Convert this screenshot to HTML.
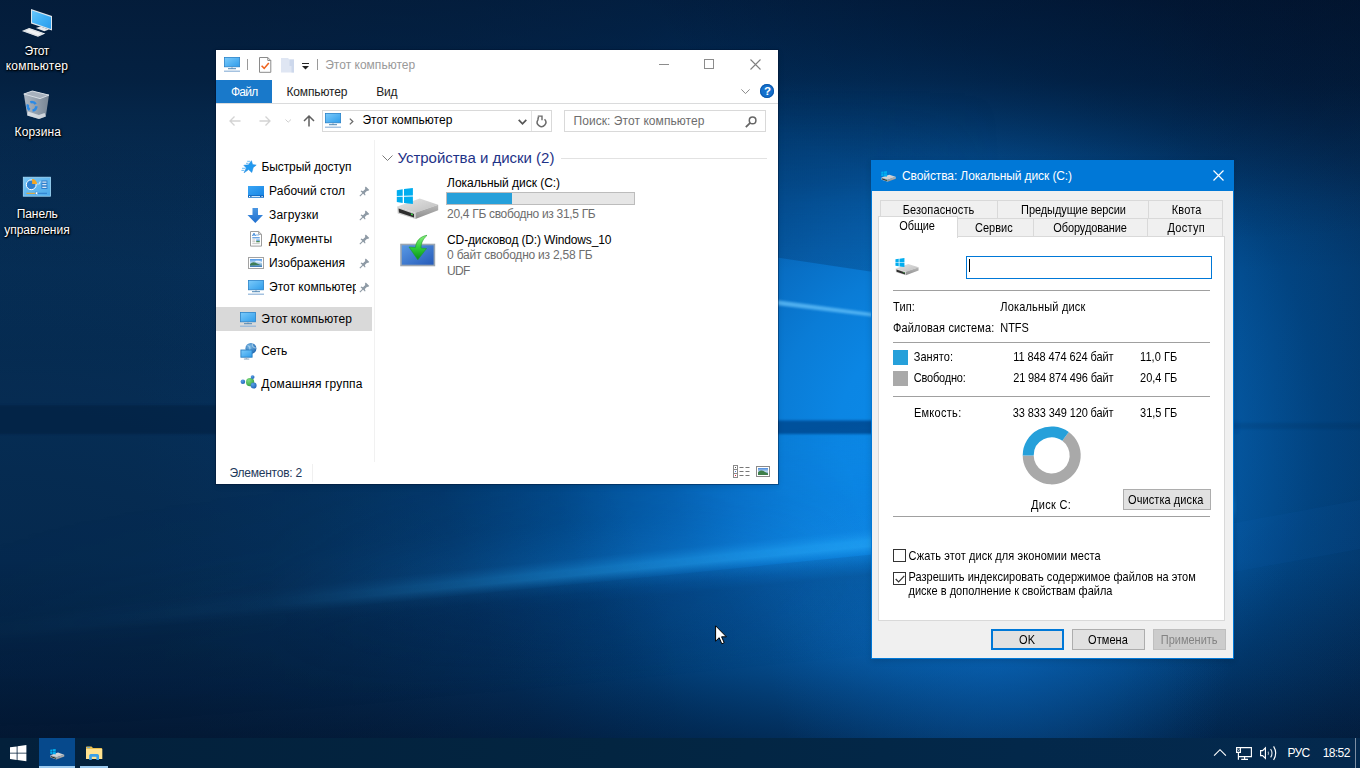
<!DOCTYPE html>
<html><head><meta charset="utf-8"><title>Desktop</title>
<style>html,body{margin:0;padding:0;width:1360px;height:768px;overflow:hidden;background:#04183a;font-family:'Liberation Sans',sans-serif;}
#root{position:relative;width:1360px;height:768px;overflow:hidden}
</style></head><body><div id="root">
<svg style="position:absolute;left:0;top:0" width="1360" height="768" viewBox="0 0 1360 768">
<defs>
<radialGradient id="glow" gradientUnits="userSpaceOnUse" cx="935" cy="430" r="800">
<stop offset="0" stop-color="#0c8ae8"/><stop offset="0.12" stop-color="#0b86e4"/><stop offset="0.2" stop-color="#0a7cd6"/><stop offset="0.27" stop-color="#086ec4"/><stop offset="0.34" stop-color="#055eac"/><stop offset="0.48" stop-color="#024888"/><stop offset="0.62" stop-color="#043c72"/><stop offset="0.78" stop-color="#063868"/><stop offset="1" stop-color="#073662"/>
</radialGradient>
<linearGradient id="topdark" gradientUnits="userSpaceOnUse" x1="0" y1="0" x2="0" y2="270"><stop offset="0" stop-color="#010a1e" stop-opacity="0.58"/><stop offset="0.3" stop-color="#010a1e" stop-opacity="0.48"/><stop offset="0.55" stop-color="#010a1e" stop-opacity="0.26"/><stop offset="0.75" stop-color="#010a1e" stop-opacity="0.1"/><stop offset="1" stop-color="#010a1e" stop-opacity="0"/></linearGradient>
<linearGradient id="botdark" x1="0" y1="0" x2="0" y2="1"><stop offset="0" stop-color="#010a1e" stop-opacity="0"/><stop offset="0.55" stop-color="#010a1e" stop-opacity="0.27"/><stop offset="0.85" stop-color="#010a1e" stop-opacity="0.5"/><stop offset="1" stop-color="#010a1e" stop-opacity="0.56"/></linearGradient>
<linearGradient id="rightdark" gradientUnits="userSpaceOnUse" x1="1150" y1="0" x2="1360" y2="0"><stop offset="0" stop-color="#010a1e" stop-opacity="0"/><stop offset="1" stop-color="#010a1e" stop-opacity="0.1"/></linearGradient>
<linearGradient id="beam" gradientUnits="userSpaceOnUse" x1="537.4" y1="598.1" x2="523.1" y2="454.9"><stop offset="0" stop-color="#20a4fa" stop-opacity="0"/><stop offset="0.07" stop-color="#20a4fa" stop-opacity="0.12"/><stop offset="0.13" stop-color="#28acfc" stop-opacity="0.6"/><stop offset="0.17" stop-color="#24a8fa" stop-opacity="0.62"/><stop offset="0.25" stop-color="#1490f0" stop-opacity="0.3"/><stop offset="0.5" stop-color="#0c80e4" stop-opacity="0.12"/><stop offset="1" stop-color="#0a70d8" stop-opacity="0"/></linearGradient>
<linearGradient id="beamfade" gradientUnits="userSpaceOnUse" x1="0" y1="0" x2="1360" y2="0"><stop offset="0" stop-color="#fff" stop-opacity="0.03"/><stop offset="0.2" stop-color="#fff" stop-opacity="0.1"/><stop offset="0.4" stop-color="#fff" stop-opacity="0.6"/><stop offset="0.64" stop-color="#fff" stop-opacity="1"/><stop offset="0.9" stop-color="#fff" stop-opacity="1"/><stop offset="0.91" stop-color="#fff" stop-opacity="0"/></linearGradient>
<linearGradient id="under" gradientUnits="userSpaceOnUse" x1="536" y1="588" x2="546" y2="688"><stop offset="0" stop-color="#021a40" stop-opacity="0.1"/><stop offset="0.2" stop-color="#021a40" stop-opacity="0.3"/><stop offset="1" stop-color="#021a40" stop-opacity="0"/></linearGradient>
<mask id="bm"><rect width="1360" height="768" fill="url(#beamfade)"/></mask>
<linearGradient id="panetop" gradientUnits="userSpaceOnUse" x1="0" y1="90" x2="0" y2="270"><stop offset="0" stop-color="#02244e" stop-opacity="0"/><stop offset="0.5" stop-color="#02244e" stop-opacity="0.16"/><stop offset="1" stop-color="#02244e" stop-opacity="0.26"/></linearGradient>
<radialGradient id="bl" gradientUnits="userSpaceOnUse" cx="0" cy="820" r="700"><stop offset="0" stop-color="#010a1e" stop-opacity="0.42"/><stop offset="0.5" stop-color="#010a1e" stop-opacity="0.25"/><stop offset="1" stop-color="#010a1e" stop-opacity="0"/></radialGradient>
<radialGradient id="br" gradientUnits="userSpaceOnUse" cx="1420" cy="800" r="330"><stop offset="0" stop-color="#010a1e" stop-opacity="0.14"/><stop offset="1" stop-color="#010a1e" stop-opacity="0"/></radialGradient>
<radialGradient id="tr" gradientUnits="userSpaceOnUse" cx="0" cy="0" r="1" gradientTransform="translate(1230 -110) scale(620 350)"><stop offset="0" stop-color="#010a1e" stop-opacity="0.55"/><stop offset="0.6" stop-color="#010a1e" stop-opacity="0.3"/><stop offset="1" stop-color="#010a1e" stop-opacity="0"/></radialGradient>
<linearGradient id="ptm" gradientUnits="userSpaceOnUse" x1="860" y1="0" x2="1000" y2="0"><stop offset="0" stop-color="#fff" stop-opacity="1"/><stop offset="1" stop-color="#fff" stop-opacity="0"/></linearGradient>
<mask id="ptmask"><rect width="1360" height="768" fill="url(#ptm)"/></mask>
<radialGradient id="spot" gradientUnits="userSpaceOnUse" cx="1000" cy="655" r="230"><stop offset="0" stop-color="#0a6cc8" stop-opacity="0.4"/><stop offset="1" stop-color="#0a6cc8" stop-opacity="0"/></radialGradient>
<linearGradient id="lm" gradientUnits="userSpaceOnUse" x1="0" y1="110" x2="0" y2="404"><stop offset="0" stop-color="#010a1e" stop-opacity="0"/><stop offset="0.3" stop-color="#010a1e" stop-opacity="0.13"/><stop offset="0.8" stop-color="#010a1e" stop-opacity="0.1"/><stop offset="1" stop-color="#010a1e" stop-opacity="0.04"/></linearGradient>
<filter id="b6" x="-10%" y="-100%" width="120%" height="300%"><feGaussianBlur stdDeviation="5"/></filter>
<filter id="b2" x="-10%" y="-100%" width="120%" height="300%"><feGaussianBlur stdDeviation="1"/></filter>
</defs>
<rect width="1360" height="768" fill="url(#glow)"/>
<rect width="1360" height="270" fill="url(#topdark)"/>
<rect y="560" width="1360" height="208" fill="url(#botdark)"/>
<rect x="1150" width="210" height="768" fill="url(#rightdark)"/>
<rect x="-10" y="110" width="226" height="294" fill="url(#lm)"/>
<rect width="1360" height="768" fill="url(#spot)"/>
<rect width="1360" height="768" fill="url(#bl)"/>
<rect width="1360" height="768" fill="url(#br)"/>
<rect width="1360" height="400" fill="url(#tr)"/>
<!-- pane top edge: darker above -->
<path d="M600 90 L1000 90 L1000 291 L600 231 Z" fill="url(#panetop)" mask="url(#ptmask)"/>
<!-- horizontal bar of the window logo -->
<rect x="760" y="420.5" width="480" height="13.5" fill="#04519c" filter="url(#b2)"/>
<rect x="-20" y="405" width="780" height="29" fill="#021230" opacity="0.36" filter="url(#b2)"/>
<rect x="1230" y="423" width="150" height="6" fill="#021230" opacity="0.1" filter="url(#b2)"/>
<!-- light streak -->
<path d="M700 290 L880 314 L880 317.5 L700 296 Z" fill="#66c2fb" opacity="0.75" filter="url(#b2)"/>
<!-- floor beam -->
<g mask="url(#bm)">
<path d="M1360 360 L1360 520 L0 656 L0 496 Z" fill="url(#beam)"/>
<path d="M1360 505.8 L0 641.8 L0 750 L1360 614 Z" fill="url(#under)"/>
</g>
<path d="M1234 572 L1360 549 L1360 500 L1234 523 Z" fill="#1a7ad8" opacity="0.06"/>
</svg>
<svg style="position:absolute;left:0;top:0" width="80" height="250" viewBox="0 0 80 250">
<defs>
<linearGradient id="mon" x1="0" y1="0" x2="1" y2="1"><stop offset="0" stop-color="#69c6fb"/><stop offset="0.5" stop-color="#3fb0f5"/><stop offset="1" stop-color="#2a9cec"/></linearGradient>
<linearGradient id="bin" x1="0" y1="0" x2="1" y2="0"><stop offset="0" stop-color="#bcc5cf"/><stop offset="1" stop-color="#828e9b"/></linearGradient>
<linearGradient id="cpl" x1="0" y1="0" x2="1" y2="1"><stop offset="0" stop-color="#7cc8f6"/><stop offset="1" stop-color="#4aa8ea"/></linearGradient>
</defs>
<!-- this pc -->
<path d="M31 9 L52 16 V30.4 L31 23.6 Z" fill="#dfe5ea"/>
<path d="M32 10.6 L51 16.9 V29 L32 22.6 Z" fill="url(#mon)"/>
<path d="M35.9 28.1 L40.6 26.4 L49 29.5 L44.3 31.2 Z" fill="#e4e8ec"/>
<path d="M21.9 30.9 L29.2 27.9 L45.3 33.5 L38 36.8 Z" fill="#f1f3f5"/>
<path d="M24 31 L29.2 28.9 L43 33.6 L37.9 35.8 Z" fill="none" stroke="#c9ced4" stroke-width="0.6"/>
<!-- recycle bin -->
<path d="M23.8 94 L32.3 91 L49 95.1 L45.8 116.5 L39 119 L27.3 115.4 Z" fill="url(#bin)" opacity="0.92"/>
<path d="M23.8 94 L32.3 91 L49 95.1 L40 98.6 Z" fill="#a7b1bd" stroke="#dde3e9" stroke-width="0.9"/>
<path d="M27.3 115.4 L39 119 L45.8 116.5 L44.6 113 L38.8 115 L28 111.5 Z" fill="#eef1f4" opacity="0.7"/>
<circle cx="32" cy="106.3" r="4.3" fill="none" stroke="#2b8ae6" stroke-width="2.6" stroke-dasharray="6 3"/>
<!-- control panel -->
<rect x="23.3" y="177.2" width="27.2" height="19" fill="url(#cpl)" stroke="#a6dcfa" stroke-width="0.8"/>
<circle cx="31.2" cy="184.8" r="4.9" fill="#2f80d0" stroke="#fff" stroke-width="1"/>
<path d="M31.2 184.8 V179.9 A4.9 4.9 0 0 1 36.1 184.8 Z" fill="#f5a623" transform="translate(0.9 -0.9)"/>
<rect x="41.4" y="180.5" width="6" height="8.5" fill="#2f7fcc"/>
<path d="M37 184 H39.5 V182 H41.4" stroke="#dff1fc" stroke-width="0.7" fill="none"/>
<rect x="42.3" y="181.6" width="4.2" height="1" fill="#fff"/><rect x="42.3" y="184.2" width="4.2" height="1" fill="#fff"/><rect x="42.3" y="186.8" width="4.2" height="1" fill="#fff"/>
<rect x="26.5" y="192.8" width="9" height="1" fill="#f5a623"/><rect x="37" y="192.8" width="10" height="1" fill="#2f7fcc"/><rect x="35.6" y="192" width="2" height="2.5" fill="#fff" stroke="#2f7fcc" stroke-width="0.4"/>
</svg>
<div style="position:absolute;left:216px;top:50px;width:562px;height:434px;background:#fff;box-shadow:0 0 0 1px rgba(0,16,44,.38),0 2px 6px rgba(0,0,0,.14);"></div><svg style="position:absolute;left:224px;top:57px;overflow:visible;" width="16" height="16" viewBox="0 0 16 16"><defs><linearGradient id="cmg" x1="0" y1="0" x2="1" y2="1"><stop offset="0" stop-color="#7ccbfb"/><stop offset="1" stop-color="#2e9cea"/></linearGradient></defs>
<rect x="0.4" y="0.4" width="15.2" height="9.4" fill="url(#cmg)" stroke="#2a82c8" stroke-width="0.8"/>
<rect x="7" y="10.5" width="2" height="1" fill="#9ab"/>
<rect x="4" y="11.2" width="8" height="1" fill="#4d86b5"/>
<rect x="0" y="13.6" width="16" height="1.2" fill="#8fb3d9"/></svg><div style="position:absolute;left:247px;top:59px;width:1px;height:11px;background:#9a9a9a"></div><svg style="position:absolute;left:259px;top:57px;overflow:visible;" width="12.5" height="16" viewBox="0 0 12.5 16"><path d="M0.5 0.5 H8.8 L11.8 3.5 V15.3 H0.5 Z" fill="#fff" stroke="#8a8a8a"/><path d="M8.8 0.5 V3.5 H11.8" fill="none" stroke="#8a8a8a"/><path d="M2.6 8.8 L5.2 11.4 L9.8 6" fill="none" stroke="#f0641e" stroke-width="1.6"/></svg><svg style="position:absolute;left:281px;top:57px;overflow:visible;" width="13" height="16" viewBox="0 0 13 16"><path d="M0 1 H7 L8.5 2.5 H13 V15.5 H0 Z" fill="#dfe6f3"/><path d="M8.5 2.5 H13 V15.5 H10.5 V9 H8.5 Z" fill="#cdd8ec"/></svg><div style="position:absolute;left:302px;top:63px;width:7px;height:1px;background:#222"></div><svg style="position:absolute;left:302px;top:65.5px;overflow:visible;" width="7" height="4" viewBox="0 0 7 4"><path d="M0 0 H7 L3.5 3.5 Z" fill="#222"/></svg><div style="position:absolute;left:317px;top:59px;width:1px;height:11px;background:#9a9a9a"></div><div style="position:absolute;left:659px;top:64px;width:10px;height:1px;background:#8c8c8c"></div><div style="position:absolute;left:704px;top:59px;width:10px;height:10px;border:1px solid #8c8c8c;box-sizing:border-box"></div><svg style="position:absolute;left:749.5px;top:58.5px;overflow:visible;" width="11" height="11" viewBox="0 0 11 11"><path d="M0.5 0.5 L10.5 10.5 M10.5 0.5 L0.5 10.5" stroke="#808080" stroke-width="1.1" fill="none"/></svg><div style="position:absolute;left:216px;top:80px;width:56px;height:23px;background:#1979ca"></div><div style="position:absolute;left:216px;top:103px;width:562px;height:1px;background:#dadbdc"></div><svg style="position:absolute;left:740.5px;top:88.5px;overflow:visible;" width="9" height="5.5" viewBox="0 0 9 5.5"><path d="M0.4 0.4 L4.5 4.6 L8.6 0.4" stroke="#8a8a8a" stroke-width="1" fill="none"/></svg><div style="position:absolute;left:760px;top:84px;width:14px;height:14px;border-radius:7px;background:#1470cc;box-shadow:inset 0 0 0 1px #0b58ad"></div><svg style="position:absolute;left:229px;top:116px;overflow:visible;" width="12" height="10" viewBox="0 0 12 10"><path d="M11.5 5 H1 M5.5 0.5 L1 5 L5.5 9.5" stroke="#d3d3d3" stroke-width="1.3" fill="none"/></svg><svg style="position:absolute;left:258.5px;top:116px;overflow:visible;" width="12" height="10" viewBox="0 0 12 10"><path d="M0.5 5 H11 M6.5 0.5 L11 5 L6.5 9.5" stroke="#d3d3d3" stroke-width="1.3" fill="none"/></svg><svg style="position:absolute;left:285px;top:119px;overflow:visible;" width="6.5" height="4" viewBox="0 0 6.5 4"><path d="M0.5 0.5 L3.2 3.2 L6 0.5" stroke="#cfcfcf" stroke-width="1" fill="none"/></svg><svg style="position:absolute;left:303px;top:114.5px;overflow:visible;" width="12" height="12" viewBox="0 0 12 12"><path d="M6 11.5 V1.2 M1 6 L6 1 L11 6" stroke="#5f5f5f" stroke-width="1.5" fill="none"/></svg><div style="position:absolute;left:322px;top:110px;width:230px;height:22px;border:1px solid #d9d9d9;box-sizing:border-box;background:#fff"></div><svg style="position:absolute;left:325px;top:113px;overflow:visible;" width="16" height="16" viewBox="0 0 16 16"><defs><linearGradient id="cmg" x1="0" y1="0" x2="1" y2="1"><stop offset="0" stop-color="#7ccbfb"/><stop offset="1" stop-color="#2e9cea"/></linearGradient></defs>
<rect x="0.4" y="0.4" width="15.2" height="9.4" fill="url(#cmg)" stroke="#2a82c8" stroke-width="0.8"/>
<rect x="7" y="10.5" width="2" height="1" fill="#9ab"/>
<rect x="4" y="11.2" width="8" height="1" fill="#4d86b5"/>
<rect x="0" y="13.6" width="16" height="1.2" fill="#8fb3d9"/></svg><svg style="position:absolute;left:348.5px;top:117.5px;overflow:visible;" width="5" height="7" viewBox="0 0 5 7"><path d="M0.8 0.6 L3.8 3.5 L0.8 6.4" stroke="#6a6a6a" stroke-width="1.3" fill="none"/></svg><svg style="position:absolute;left:517.5px;top:119px;overflow:visible;" width="9" height="6.5" viewBox="0 0 9 6.5"><path d="M0.7 0.8 L4.5 4.8 L8.3 0.8" stroke="#555" stroke-width="1.7" fill="none"/></svg><div style="position:absolute;left:531px;top:111px;width:1px;height:20px;background:#e2e2e2"></div><svg style="position:absolute;left:535.9px;top:113.9px;overflow:visible;" width="12" height="14" viewBox="0 0 12 14"><path d="M8.54 5.16 A4.3 4.3 0 1 1 1.9 5.9 Q2.0 4.2 2.6 2.9" stroke="#6b6b6b" stroke-width="1.5" fill="none"/><path d="M1.8 2.1 H6.0 V6.2" stroke="#6b6b6b" stroke-width="1.4" fill="none"/></svg><div style="position:absolute;left:564px;top:110px;width:202px;height:22px;border:1px solid #d9d9d9;box-sizing:border-box;background:#fff"></div><svg style="position:absolute;left:745px;top:115.5px;overflow:visible;" width="12" height="12" viewBox="0 0 12 12"><circle cx="7.6" cy="4.4" r="3.3" stroke="#666" stroke-width="1.5" fill="none"/><path d="M5.2 6.8 L0.8 11.2" stroke="#666" stroke-width="1.8"/></svg><div style="position:absolute;left:374px;top:140px;width:1px;height:322px;background:#f1f1f1"></div><svg style="position:absolute;left:236px;top:156px" width="30" height="20" viewBox="236 156 30 20"><path d="M251.4 160.7 L252.6 164.6 L256.2 165.1 L253.2 167.6 L251.8 172.5 L248.6 169.6 L244 172.8 L246.4 168 L243.8 165.3 L248.6 164.8 Z" fill="#219af0" stroke="#1b84dc" stroke-width="0.5" stroke-linejoin="round"/>
<path d="M247.2 161.3 H250 M246 163.3 H248.6 M242 168.3 H245.6 M241.4 170.4 H244.4" stroke="#58b4f4" stroke-width="0.9" fill="none"/></svg><svg style="position:absolute;left:248px;top:185.5px;overflow:visible;" width="16" height="12" viewBox="0 0 16 12"><defs><linearGradient id="dkg" x1="0" y1="0" x2="1" y2="1"><stop offset="0" stop-color="#3aa5f5"/><stop offset="1" stop-color="#1583e3"/></linearGradient></defs>
<rect x="0" y="0" width="16" height="11.5" fill="url(#dkg)"/>
<rect x="0" y="9.3" width="16" height="2.2" fill="#0e62b8"/>
<rect x="1" y="10" width="1.2" height="1" fill="#fff"/><rect x="3.5" y="10" width="8.5" height="1" fill="#cfe6fa"/><rect x="13.5" y="10" width="1.2" height="1" fill="#fff"/></svg><svg style="position:absolute;left:358.5px;top:185.5px;overflow:visible;" width="11" height="11" viewBox="0 0 11 11"><path d="M6.8 0.5 L10.3 4.0 L8.9 4.9 L8.1 4.7 L5.8 7.0 L6.5 9.0 L5.9 9.5 L1.6 5.2 L2.2 4.6 L4.0 5.2 L6.3 2.9 L5.9 1.7 Z" fill="#8e9aa5"/><path d="M3.9 7.2 L0.8 10.1" stroke="#8e9aa5" stroke-width="1.1"/></svg><svg style="position:absolute;left:247px;top:208px;overflow:visible;" width="17" height="16" viewBox="0 0 17 16"><defs><linearGradient id="dlg" x1="0" y1="0" x2="0" y2="1"><stop offset="0" stop-color="#4a96e2"/><stop offset="1" stop-color="#1f6fcf"/></linearGradient></defs>
<path d="M5.5 0 H11 V7 H16 L8.3 15 L0.5 7 H5.5 Z" fill="url(#dlg)"/></svg><svg style="position:absolute;left:358.5px;top:209.5px;overflow:visible;" width="11" height="11" viewBox="0 0 11 11"><path d="M6.8 0.5 L10.3 4.0 L8.9 4.9 L8.1 4.7 L5.8 7.0 L6.5 9.0 L5.9 9.5 L1.6 5.2 L2.2 4.6 L4.0 5.2 L6.3 2.9 L5.9 1.7 Z" fill="#8e9aa5"/><path d="M3.9 7.2 L0.8 10.1" stroke="#8e9aa5" stroke-width="1.1"/></svg><svg style="position:absolute;left:250px;top:231.1px;overflow:visible;" width="12" height="16" viewBox="0 0 12 16"><path d="M0.5 0.5 H8.7 L11.5 3.3 V15.1 H0.5 Z" fill="#fff" stroke="#9c9c9c" stroke-width="1"/>
<path d="M8.7 0.5 V3.3 H11.5" fill="none" stroke="#9c9c9c" stroke-width="1"/>
<path d="M2.4 5 L4 2.2 L5.6 5 M3 4 H5" stroke="#2f7fd6" stroke-width="0.9" fill="none"/>
<rect x="6" y="3.6" width="3" height="0.8" fill="#5a9be0"/>
<rect x="2.3" y="6.3" width="7.4" height="1" fill="#2f7fd6"/>
<rect x="2.3" y="8.6" width="3" height="0.8" fill="#b0b0b0"/><rect x="2.3" y="10.4" width="3" height="0.8" fill="#b0b0b0"/><rect x="2.3" y="12.3" width="7.4" height="0.8" fill="#b8b8b8"/>
<rect x="6.2" y="8.4" width="3.6" height="1.5" fill="#6aa8e8"/><rect x="6.2" y="9.9" width="3.6" height="1.4" fill="#4f8a58"/></svg><svg style="position:absolute;left:358.5px;top:233.5px;overflow:visible;" width="11" height="11" viewBox="0 0 11 11"><path d="M6.8 0.5 L10.3 4.0 L8.9 4.9 L8.1 4.7 L5.8 7.0 L6.5 9.0 L5.9 9.5 L1.6 5.2 L2.2 4.6 L4.0 5.2 L6.3 2.9 L5.9 1.7 Z" fill="#8e9aa5"/><path d="M3.9 7.2 L0.8 10.1" stroke="#8e9aa5" stroke-width="1.1"/></svg><svg style="position:absolute;left:248px;top:257px;overflow:visible;" width="16" height="12" viewBox="0 0 16 12"><defs><linearGradient id="img1" x1="0" y1="0" x2="0" y2="1"><stop offset="0" stop-color="#4f97e6"/><stop offset="0.45" stop-color="#b9d8f3"/><stop offset="0.7" stop-color="#8db6d0"/><stop offset="1" stop-color="#3272b4"/></linearGradient></defs>
<rect x="0.5" y="0.5" width="15" height="11" fill="#fff" stroke="#a2a2a2" stroke-width="1"/>
<rect x="2" y="2" width="12" height="8" fill="url(#img1)"/>
<path d="M2 7.6 C3.5 5 6 4.6 8.5 6.2 L12.5 8 L2 8.6 Z" fill="#3f7d55"/>
<path d="M7 4.2 C9 3.4 12 3.8 14 5 L14 6 C12 5.4 9 5 7 4.8 Z" fill="#fff" opacity="0.75"/></svg><svg style="position:absolute;left:358.5px;top:257.5px;overflow:visible;" width="11" height="11" viewBox="0 0 11 11"><path d="M6.8 0.5 L10.3 4.0 L8.9 4.9 L8.1 4.7 L5.8 7.0 L6.5 9.0 L5.9 9.5 L1.6 5.2 L2.2 4.6 L4.0 5.2 L6.3 2.9 L5.9 1.7 Z" fill="#8e9aa5"/><path d="M3.9 7.2 L0.8 10.1" stroke="#8e9aa5" stroke-width="1.1"/></svg><svg style="position:absolute;left:248px;top:280px;overflow:visible;" width="16" height="16" viewBox="0 0 16 16"><defs><linearGradient id="cmg" x1="0" y1="0" x2="1" y2="1"><stop offset="0" stop-color="#7ccbfb"/><stop offset="1" stop-color="#2e9cea"/></linearGradient></defs>
<rect x="0.4" y="0.4" width="15.2" height="9.4" fill="url(#cmg)" stroke="#2a82c8" stroke-width="0.8"/>
<rect x="7" y="10.5" width="2" height="1" fill="#9ab"/>
<rect x="4" y="11.2" width="8" height="1" fill="#4d86b5"/>
<rect x="0" y="13.6" width="16" height="1.2" fill="#8fb3d9"/></svg><div style="position:absolute;left:269.1px;top:277px;width:87px;height:20px;overflow:hidden"><span style="position:absolute;left:0;top:3.84px;font-size:12px;line-height:12px;color:#000;white-space:pre">Этот компьютер</span></div><svg style="position:absolute;left:358.5px;top:281.5px;overflow:visible;" width="11" height="11" viewBox="0 0 11 11"><path d="M6.8 0.5 L10.3 4.0 L8.9 4.9 L8.1 4.7 L5.8 7.0 L6.5 9.0 L5.9 9.5 L1.6 5.2 L2.2 4.6 L4.0 5.2 L6.3 2.9 L5.9 1.7 Z" fill="#8e9aa5"/><path d="M3.9 7.2 L0.8 10.1" stroke="#8e9aa5" stroke-width="1.1"/></svg><div style="position:absolute;left:216px;top:307px;width:156px;height:24px;background:#d9d9d9"></div><svg style="position:absolute;left:240px;top:312px;overflow:visible;" width="16" height="16" viewBox="0 0 16 16"><defs><linearGradient id="cmg" x1="0" y1="0" x2="1" y2="1"><stop offset="0" stop-color="#7ccbfb"/><stop offset="1" stop-color="#2e9cea"/></linearGradient></defs>
<rect x="0.4" y="0.4" width="15.2" height="9.4" fill="url(#cmg)" stroke="#2a82c8" stroke-width="0.8"/>
<rect x="7" y="10.5" width="2" height="1" fill="#9ab"/>
<rect x="4" y="11.2" width="8" height="1" fill="#4d86b5"/>
<rect x="0" y="13.6" width="16" height="1.2" fill="#8fb3d9"/></svg><svg style="position:absolute;left:239.5px;top:342.5px;overflow:visible;" width="18" height="18" viewBox="0 0 18 18"><defs><radialGradient id="glb" cx="0.4" cy="0.35" r="0.7"><stop offset="0" stop-color="#7dbce8"/><stop offset="1" stop-color="#1d64ad"/></radialGradient>
<linearGradient id="nmg" x1="0" y1="0" x2="1" y2="1"><stop offset="0" stop-color="#7ccbfb"/><stop offset="1" stop-color="#2e9cea"/></linearGradient></defs>
<circle cx="10.9" cy="5.4" r="5.5" fill="url(#glb)"/>
<path d="M7.5 2.5 C9.5 3.2 10.5 5 9.6 7.5 M12.5 0.6 C11.5 3 13.5 5 16 5" stroke="#cfe8f6" stroke-width="1.2" fill="none" opacity="0.55"/>
<rect x="0.9" y="7" width="11.2" height="7.2" fill="url(#nmg)" stroke="#2a7fc2" stroke-width="0.9"/>
<rect x="5.6" y="14.7" width="1.6" height="1" fill="#9ab"/><rect x="3.9" y="15.6" width="5.4" height="0.9" fill="#7d9cba"/></svg><svg style="position:absolute;left:240.5px;top:374.5px;overflow:visible;" width="17" height="15" viewBox="0 0 17 15"><defs><radialGradient id="hg1" cx="0.35" cy="0.3" r="0.8"><stop offset="0" stop-color="#7fdc7f"/><stop offset="1" stop-color="#2e9a3c"/></radialGradient>
<radialGradient id="hg2" cx="0.35" cy="0.3" r="0.8"><stop offset="0" stop-color="#5aa0e6"/><stop offset="1" stop-color="#1a5fb4"/></radialGradient></defs>
<circle cx="1.9" cy="6.8" r="2.3" fill="url(#hg2)"/>
<circle cx="9.1" cy="7.2" r="4.1" fill="url(#hg1)"/>
<circle cx="11.6" cy="2.1" r="1.9" fill="url(#hg2)"/>
<circle cx="12.6" cy="10.6" r="3" fill="url(#hg2)"/></svg><svg style="position:absolute;left:381.5px;top:155px;overflow:visible;" width="11" height="6.5" viewBox="0 0 11 6.5"><path d="M0.5 0.5 L5.5 5.5 L10.5 0.5" stroke="#7a7a7a" stroke-width="1" fill="none"/></svg><div style="position:absolute;left:561px;top:158px;width:206px;height:1px;background:#e2e2e2"></div><svg style="position:absolute;left:396px;top:187.7px;overflow:visible;" width="43" height="32" viewBox="0 0 43 32"><defs>
<linearGradient id="dta" x1="0" y1="0" x2="1" y2="1"><stop offset="0" stop-color="#e6e6e6"/><stop offset="1" stop-color="#bdbdbd"/></linearGradient>
<linearGradient id="dsa" x1="0" y1="0" x2="0" y2="1"><stop offset="0" stop-color="#b9b9b9"/><stop offset="1" stop-color="#8e8e8e"/></linearGradient>
</defs>
<path d="M1.2 18.6 L23.7 10.6 L42.2 16.7 L19.4 24.8 Z" fill="url(#dta)"/>
<path d="M19.4 24.8 L42.2 16.7 V22.3 L19.4 31 Z" fill="url(#dsa)"/>
<path d="M1.2 18.6 L19.4 24.8 V31 L1.7 25.4 Z" fill="#d0d0d0"/>
<path d="M2.6 20.6 L18 25.9 V29.4 L2.9 24.5 Z" fill="#2e2e2e"/>
<rect x="15" y="25.6" width="1.8" height="1.5" fill="#3fe04a" transform="skewY(18) translate(0,-5.1)"/>
<g fill="#00adef"><path d="M0.8 2.2 L6.7 1.3 V7.7 L0.8 7.9 Z"/><path d="M8 1.1 L16.9 0 V7.5 L8 7.7 Z"/><path d="M0.8 8.8 L6.7 8.7 V14.9 L0.8 14 Z"/><path d="M8 8.7 L16.9 8.5 V16.1 L8 15 Z"/></g></svg><div style="position:absolute;left:446px;top:192px;width:189px;height:13px;background:#e6e6e6;border:1px solid #bcbcbc;box-sizing:border-box"></div><div style="position:absolute;left:447px;top:193px;width:65px;height:11px;background:#26a0da"></div><svg style="position:absolute;left:400.4px;top:235.3px;overflow:visible;" width="36" height="32" viewBox="0 0 36 32"><defs><linearGradient id="cdb" x1="0" y1="0" x2="1" y2="1"><stop offset="0" stop-color="#5a9be6"/><stop offset="1" stop-color="#2459b8"/></linearGradient>
<linearGradient id="cdg" x1="0" y1="0" x2="0" y2="1"><stop offset="0" stop-color="#8af07a"/><stop offset="0.5" stop-color="#2fcf3a"/><stop offset="1" stop-color="#0a8f1c"/></linearGradient></defs>
<rect x="1" y="9.5" width="33.4" height="21" fill="url(#cdb)" stroke="#9aa5b1" stroke-width="1.6"/>
<path d="M27 0.3 C20 1.5 16 6 15.5 12.5 L9 12 L17.8 24.8 L26.5 13.5 L21 13 C21 8 23 4 27 0.3 Z" fill="url(#cdg)" stroke="#1f9a2c" stroke-width="0.6"/></svg><div style="position:absolute;left:312px;top:464px;width:1px;height:18px;background:#f0f0f0"></div><svg style="position:absolute;left:733px;top:465px;overflow:visible;" width="17" height="13" viewBox="0 0 17 13"><g fill="none" stroke="#8a8a8a"><rect x="0.5" y="0.5" width="4" height="12"/><path d="M0.5 4.5 H4.5 M0.5 8.5 H4.5"/></g><rect x="2" y="2" width="1" height="1" fill="#555"/><rect x="2" y="6" width="1" height="1" fill="#4a7de0"/><rect x="2" y="10" width="1" height="1" fill="#e0203a"/><g fill="#777"><rect x="6.5" y="2" width="4" height="1"/><rect x="12.5" y="2" width="4" height="1"/><rect x="6.5" y="6" width="4" height="1"/><rect x="12.5" y="6" width="4" height="1"/><rect x="6.5" y="10" width="4" height="1"/><rect x="12.5" y="10" width="4" height="1"/></g></svg><svg style="position:absolute;left:756px;top:466px;overflow:visible;" width="14" height="11" viewBox="0 0 14 11"><defs><linearGradient id="sbi" x1="0" y1="0" x2="0" y2="1"><stop offset="0" stop-color="#4a8be0"/><stop offset="0.5" stop-color="#bcd6ea"/><stop offset="1" stop-color="#2f6fa8"/></linearGradient></defs><rect x="0.5" y="0.5" width="13" height="10" fill="#fff" stroke="#8a8a8a"/><rect x="2" y="2" width="10" height="7" fill="url(#sbi)"/><path d="M2 6.5 C4 4 7 4 9 6 L12 7.5 V9 H2 Z" fill="#3f7f4a"/></svg><div style="position:absolute;left:871px;top:160px;width:363px;height:499px;background:#f0f0f0;box-shadow:0 2px 6px rgba(0,0,0,.14);border:1px solid #0078d7;box-sizing:border-box"></div><div style="position:absolute;left:871px;top:160px;width:363px;height:31px;background:#0078d7"></div><svg style="position:absolute;left:880.6px;top:170.6px;overflow:visible;" width="15" height="11.2" viewBox="0 0 43 32"><defs>
<linearGradient id="dtb" x1="0" y1="0" x2="1" y2="1"><stop offset="0" stop-color="#e6e6e6"/><stop offset="1" stop-color="#bdbdbd"/></linearGradient>
<linearGradient id="dsb" x1="0" y1="0" x2="0" y2="1"><stop offset="0" stop-color="#b9b9b9"/><stop offset="1" stop-color="#8e8e8e"/></linearGradient>
</defs>
<path d="M1.2 18.6 L23.7 10.6 L42.2 16.7 L19.4 24.8 Z" fill="url(#dtb)"/>
<path d="M19.4 24.8 L42.2 16.7 V22.3 L19.4 31 Z" fill="url(#dsb)"/>
<path d="M1.2 18.6 L19.4 24.8 V31 L1.7 25.4 Z" fill="#d0d0d0"/>
<path d="M2.6 20.6 L18 25.9 V29.4 L2.9 24.5 Z" fill="#2e2e2e"/>
<rect x="15" y="25.6" width="1.8" height="1.5" fill="#3fe04a" transform="skewY(18) translate(0,-5.1)"/>
<g fill="#00adef"><path d="M0.8 2.2 L6.7 1.3 V7.7 L0.8 7.9 Z"/><path d="M8 1.1 L16.9 0 V7.5 L8 7.7 Z"/><path d="M0.8 8.8 L6.7 8.7 V14.9 L0.8 14 Z"/><path d="M8 8.7 L16.9 8.5 V16.1 L8 15 Z"/></g></svg><svg style="position:absolute;left:1212.5px;top:169.5px;overflow:visible;" width="11" height="11" viewBox="0 0 11 11"><path d="M0.5 0.5 L10.5 10.5 M10.5 0.5 L0.5 10.5" stroke="#fff" stroke-width="1.2" fill="none"/></svg><div style="position:absolute;left:880px;top:200px;width:118px;height:19px;border:1px solid #d9d9d9;box-sizing:border-box;background:#f0f0f0"></div><div style="position:absolute;left:997px;top:200px;width:152px;height:19px;border:1px solid #d9d9d9;box-sizing:border-box;background:#f0f0f0"></div><div style="position:absolute;left:1148px;top:200px;width:75px;height:19px;border:1px solid #d9d9d9;box-sizing:border-box;background:#f0f0f0"></div><div style="position:absolute;left:957px;top:218px;width:77px;height:19px;border:1px solid #d9d9d9;box-sizing:border-box;background:#f0f0f0"></div><div style="position:absolute;left:1033px;top:218px;width:115px;height:19px;border:1px solid #d9d9d9;box-sizing:border-box;background:#f0f0f0"></div><div style="position:absolute;left:1147px;top:218px;width:76px;height:19px;border:1px solid #d9d9d9;box-sizing:border-box;background:#f0f0f0"></div><div style="position:absolute;left:878px;top:236px;width:347px;height:385px;background:#fff;border:1px solid #d9d9d9;box-sizing:border-box"></div><div style="position:absolute;left:878px;top:216px;width:80px;height:22px;background:#fff;border:1px solid #d9d9d9;border-bottom:none;box-sizing:border-box"></div><svg style="position:absolute;left:894.6px;top:257.7px;overflow:visible;" width="24" height="17.9" viewBox="0 0 43 32"><defs>
<linearGradient id="dtc" x1="0" y1="0" x2="1" y2="1"><stop offset="0" stop-color="#e6e6e6"/><stop offset="1" stop-color="#bdbdbd"/></linearGradient>
<linearGradient id="dsc" x1="0" y1="0" x2="0" y2="1"><stop offset="0" stop-color="#b9b9b9"/><stop offset="1" stop-color="#8e8e8e"/></linearGradient>
</defs>
<path d="M1.2 18.6 L23.7 10.6 L42.2 16.7 L19.4 24.8 Z" fill="url(#dtc)"/>
<path d="M19.4 24.8 L42.2 16.7 V22.3 L19.4 31 Z" fill="url(#dsc)"/>
<path d="M1.2 18.6 L19.4 24.8 V31 L1.7 25.4 Z" fill="#d0d0d0"/>
<path d="M2.6 20.6 L18 25.9 V29.4 L2.9 24.5 Z" fill="#2e2e2e"/>
<rect x="15" y="25.6" width="1.8" height="1.5" fill="#3fe04a" transform="skewY(18) translate(0,-5.1)"/>
<g fill="#00adef"><path d="M0.8 2.2 L6.7 1.3 V7.7 L0.8 7.9 Z"/><path d="M8 1.1 L16.9 0 V7.5 L8 7.7 Z"/><path d="M0.8 8.8 L6.7 8.7 V14.9 L0.8 14 Z"/><path d="M8 8.7 L16.9 8.5 V16.1 L8 15 Z"/></g></svg><div style="position:absolute;left:966px;top:256px;width:246px;height:23px;background:#fff;border:1px solid #0078d7;box-sizing:border-box"></div><div style="position:absolute;left:969px;top:259px;width:1px;height:13px;background:#000"></div><div style="position:absolute;left:893px;top:290px;width:317px;height:1px;background:#a0a0a0"></div><div style="position:absolute;left:893px;top:342px;width:317px;height:1px;background:#a0a0a0"></div><div style="position:absolute;left:893px;top:350px;width:15px;height:15px;background:#26a0da"></div><div style="position:absolute;left:893px;top:371px;width:15px;height:15px;background:#a9a9a9"></div><div style="position:absolute;left:893px;top:396px;width:317px;height:1px;background:#a0a0a0"></div><svg style="position:absolute;left:0;top:0" width="1360" height="768"><path d="M1068.78 431.96 A29 29 0 1 1 1022.70 455.40 L1033.70 455.40 A18 18 0 1 0 1062.30 440.85 Z" fill="#a9a9a9"/><path d="M1022.70 455.40 A29 29 0 0 1 1068.78 431.96 L1062.30 440.85 A18 18 0 0 0 1033.70 455.40 Z" fill="#26a0da"/></svg><div style="position:absolute;left:1123px;top:489px;width:88px;height:21px;background:#e1e1e1;border:1px solid #adadad;box-sizing:border-box"></div><div style="position:absolute;left:893px;top:516px;width:317px;height:1px;background:#a0a0a0"></div><div style="position:absolute;left:893px;top:549px;width:13px;height:13px;background:#fff;border:1px solid #333;box-sizing:border-box"></div><div style="position:absolute;left:893px;top:572px;width:13px;height:13px;background:#fff;border:1px solid #333;box-sizing:border-box"></div><svg style="position:absolute;left:894.5px;top:574.5px;overflow:visible;" width="10" height="8" viewBox="0 0 10 8"><path d="M0.7 4 L3.6 6.9 L9.3 0.8" stroke="#333" stroke-width="1.2" fill="none"/></svg><div style="position:absolute;left:991px;top:629px;width:73px;height:21px;background:#e1e1e1;border:2px solid #0078d7;box-sizing:border-box"></div><div style="position:absolute;left:1072px;top:629px;width:73px;height:21px;background:#e1e1e1;border:1px solid #adadad;box-sizing:border-box"></div><div style="position:absolute;left:1153px;top:629px;width:73px;height:21px;background:#cccccc;border:1px solid #bfbfbf;box-sizing:border-box"></div><svg style="position:absolute;left:714.5px;top:624.5px;overflow:visible;" width="13" height="20" viewBox="0 0 13 20"><path d="M0.6 0.8 V16.2 L4.2 12.7 L6.8 18.8 L9.2 17.7 L6.6 11.8 H11.4 Z" fill="#fff" stroke="#000" stroke-width="1" stroke-linejoin="round"/></svg><div style="position:absolute;left:0px;top:738px;width:1360px;height:30px;background:linear-gradient(90deg,#03203b 0%,#032541 45%,#03284a 75%,#04294e 100%)"></div><svg style="position:absolute;left:9.6px;top:744.8px;overflow:visible;" width="16.4" height="16.3" viewBox="0 0 16.4 16.3"><g fill="#fff"><path d="M0 2.3 L6.7 1.4 V7.7 H0 Z"/><path d="M7.5 1.3 L16.4 0 V7.7 H7.5 Z"/><path d="M0 8.5 H6.7 V14.9 L0 14 Z"/><path d="M7.5 8.5 H16.4 V16.3 L7.5 15 Z"/></g></svg><div style="position:absolute;left:39px;top:738px;width:36px;height:30px;background:#06498c"></div><div style="position:absolute;left:39px;top:766px;width:36px;height:2px;background:#9dcbf0"></div><svg style="position:absolute;left:49.7px;top:749px;overflow:visible;" width="14.5" height="10.8" viewBox="0 0 43 32"><defs>
<linearGradient id="dtd" x1="0" y1="0" x2="1" y2="1"><stop offset="0" stop-color="#e6e6e6"/><stop offset="1" stop-color="#bdbdbd"/></linearGradient>
<linearGradient id="dsd" x1="0" y1="0" x2="0" y2="1"><stop offset="0" stop-color="#b9b9b9"/><stop offset="1" stop-color="#8e8e8e"/></linearGradient>
</defs>
<path d="M1.2 18.6 L23.7 10.6 L42.2 16.7 L19.4 24.8 Z" fill="url(#dtd)"/>
<path d="M19.4 24.8 L42.2 16.7 V22.3 L19.4 31 Z" fill="url(#dsd)"/>
<path d="M1.2 18.6 L19.4 24.8 V31 L1.7 25.4 Z" fill="#d0d0d0"/>
<path d="M2.6 20.6 L18 25.9 V29.4 L2.9 24.5 Z" fill="#2e2e2e"/>
<rect x="15" y="25.6" width="1.8" height="1.5" fill="#3fe04a" transform="skewY(18) translate(0,-5.1)"/>
<g fill="#00adef"><path d="M0.8 2.2 L6.7 1.3 V7.7 L0.8 7.9 Z"/><path d="M8 1.1 L16.9 0 V7.5 L8 7.7 Z"/><path d="M0.8 8.8 L6.7 8.7 V14.9 L0.8 14 Z"/><path d="M8 8.7 L16.9 8.5 V16.1 L8 15 Z"/></g></svg><div style="position:absolute;left:80px;top:766px;width:28px;height:2px;background:#9dcbf0"></div><svg style="position:absolute;left:85.8px;top:745.7px;overflow:visible;" width="16.2" height="14.5" viewBox="0 0 16.2 14.5"><path d="M0 1.2 Q0 0.4 0.8 0.4 H5.5 L7 2 H15.4 Q16.2 2 16.2 2.8 V13 H0 Z" fill="#e9bf4f"/>
<rect x="0" y="3" width="16.2" height="10" fill="#ffe28f"/>
<rect x="1" y="1.2" width="3" height="0.9" fill="#5aa9ec"/>
<path d="M3.2 14 V9.6 Q3.2 8 4.8 8 H11.4 Q13 8 13 9.6 V14 H10.4 V10.8 H5.8 V14 Z" fill="#3aa0e8"/></svg><svg style="position:absolute;left:1200px;top:738px" width="100" height="30" viewBox="1200 738 100 30"><g stroke="#fff" fill="none" stroke-width="1.15"><path d="M1214.1 755.7 L1220 749.7 L1225.9 755.7"/><path d="M1240.4 747.6 H1251.4 V756.6 H1238.4"/><path d="M1236.6 747.6 H1240.4 V752.4 H1236.6 Z"/><path d="M1237.6 749.4 L1238.5 750.5 L1239.4 749.4" stroke-width="0.8"/><path d="M1238.4 752.4 V759.8"/><path d="M1244.6 756.6 V759.3 M1241.2 759.4 H1248"/><path d="M1260.6 750.6 H1262.6 L1265.4 747.8 V758.4 L1262.6 755.6 H1260.6 Z"/><path d="M1268 751.6 Q1269.2 753.2 1268 754.8" stroke-opacity="0.65"/><path d="M1270.6 749 Q1273.4 753.2 1270.6 757.4" stroke-opacity="0.9"/><path d="M1273.6 746.4 Q1277.8 753.2 1273.6 760"/></g></svg><div style="position:absolute;left:1355px;top:738px;width:1px;height:30px;background:#7c8ea3"></div><span style="position:absolute;left:24.5px;top:44.84px;font-size:12px;line-height:12px;color:#fff;font-weight:400;white-space:pre;letter-spacing:-0.377px;text-shadow:0 1px 2px rgba(0,0,0,.9),0 0 3px rgba(0,0,0,.7),1px 1px 1px rgba(0,0,0,.8);">Этот</span><span style="position:absolute;left:5.7px;top:59.84px;font-size:12px;line-height:12px;color:#fff;font-weight:400;white-space:pre;letter-spacing:0.220px;text-shadow:0 1px 2px rgba(0,0,0,.9),0 0 3px rgba(0,0,0,.7),1px 1px 1px rgba(0,0,0,.8);">компьютер</span><span style="position:absolute;left:14.6px;top:125.84px;font-size:12px;line-height:12px;color:#fff;font-weight:400;white-space:pre;letter-spacing:0.083px;text-shadow:0 1px 2px rgba(0,0,0,.9),0 0 3px rgba(0,0,0,.7),1px 1px 1px rgba(0,0,0,.8);">Корзина</span><span style="position:absolute;left:16.7px;top:207.84px;font-size:12px;line-height:12px;color:#fff;font-weight:400;white-space:pre;letter-spacing:-0.061px;text-shadow:0 1px 2px rgba(0,0,0,.9),0 0 3px rgba(0,0,0,.7),1px 1px 1px rgba(0,0,0,.8);">Панель</span><span style="position:absolute;left:4.2px;top:223.84px;font-size:12px;line-height:12px;color:#fff;font-weight:400;white-space:pre;letter-spacing:0.005px;text-shadow:0 1px 2px rgba(0,0,0,.9),0 0 3px rgba(0,0,0,.7),1px 1px 1px rgba(0,0,0,.8);">управления</span><span style="position:absolute;left:325.2px;top:58.84px;font-size:12px;line-height:12px;color:#999;font-weight:400;white-space:pre;letter-spacing:0.019px;">Этот компьютер</span><span style="position:absolute;left:231.0px;top:85.84px;font-size:12px;line-height:12px;color:#fff;font-weight:400;white-space:pre;letter-spacing:-0.754px;">Файл</span><span style="position:absolute;left:286.4px;top:85.84px;font-size:12px;line-height:12px;color:#222;font-weight:400;white-space:pre;letter-spacing:-0.123px;">Компьютер</span><span style="position:absolute;left:376.2px;top:85.84px;font-size:12px;line-height:12px;color:#222;font-weight:400;white-space:pre;letter-spacing:-0.240px;">Вид</span><span style="position:absolute;left:763.9px;top:85.67px;font-size:11.5px;line-height:11.5px;color:#fff;font-weight:700;white-space:pre;">?</span><span style="position:absolute;left:362.4px;top:113.84px;font-size:12px;line-height:12px;color:#000;font-weight:400;white-space:pre;letter-spacing:0.019px;">Этот компьютер</span><span style="position:absolute;left:573.5px;top:115.44px;font-size:12px;line-height:12px;color:#6d6d6d;font-weight:400;white-space:pre;letter-spacing:0.064px;">Поиск: Этот компьютер</span><span style="position:absolute;left:261.4px;top:160.84px;font-size:12px;line-height:12px;color:#000;font-weight:400;white-space:pre;letter-spacing:-0.081px;">Быстрый доступ</span><span style="position:absolute;left:269.1px;top:184.84px;font-size:12px;line-height:12px;color:#000;font-weight:400;white-space:pre;letter-spacing:0.056px;">Рабочий стол</span><span style="position:absolute;left:269.1px;top:208.84px;font-size:12px;line-height:12px;color:#000;font-weight:400;white-space:pre;letter-spacing:0.138px;">Загрузки</span><span style="position:absolute;left:269.1px;top:232.84px;font-size:12px;line-height:12px;color:#000;font-weight:400;white-space:pre;letter-spacing:0.138px;">Документы</span><span style="position:absolute;left:269.1px;top:256.84px;font-size:12px;line-height:12px;color:#000;font-weight:400;white-space:pre;letter-spacing:0.053px;">Изображения</span><span style="position:absolute;left:261.3px;top:313.34px;font-size:12px;line-height:12px;color:#000;font-weight:400;white-space:pre;letter-spacing:0.062px;">Этот компьютер</span><span style="position:absolute;left:261.3px;top:344.84px;font-size:12px;line-height:12px;color:#000;font-weight:400;white-space:pre;letter-spacing:-0.251px;">Сеть</span><span style="position:absolute;left:261.3px;top:377.84px;font-size:12px;line-height:12px;color:#000;font-weight:400;white-space:pre;letter-spacing:0.145px;">Домашняя группа</span><span style="position:absolute;left:397.4px;top:149.80px;font-size:15px;line-height:15px;color:#1e3287;font-weight:400;white-space:pre;letter-spacing:-0.012px;">Устройства и диски (2)</span><span style="position:absolute;left:447.1px;top:176.84px;font-size:12px;line-height:12px;color:#000;font-weight:400;white-space:pre;letter-spacing:-0.030px;">Локальный диск (C:)</span><span style="position:absolute;left:447.1px;top:207.84px;font-size:12px;line-height:12px;color:#6d6d6d;font-weight:400;white-space:pre;letter-spacing:-0.316px;">20,4 ГБ свободно из 31,5 ГБ</span><span style="position:absolute;left:447.1px;top:233.84px;font-size:12px;line-height:12px;color:#000;font-weight:400;white-space:pre;letter-spacing:-0.145px;">CD-дисковод (D:) Windows_10</span><span style="position:absolute;left:447.1px;top:248.84px;font-size:12px;line-height:12px;color:#6d6d6d;font-weight:400;white-space:pre;letter-spacing:-0.229px;">0 байт свободно из 2,58 ГБ</span><span style="position:absolute;left:447.1px;top:264.84px;font-size:12px;line-height:12px;color:#6d6d6d;font-weight:400;white-space:pre;letter-spacing:-0.691px;">UDF</span><span style="position:absolute;left:229.5px;top:466.84px;font-size:12px;line-height:12px;color:#1e395b;font-weight:400;white-space:pre;letter-spacing:-0.227px;">Элементов: 2</span><span style="position:absolute;left:902.0px;top:169.84px;font-size:12px;line-height:12px;color:#fff;font-weight:400;white-space:pre;letter-spacing:-0.101px;">Свойства: Локальный диск (C:)</span><span style="position:absolute;left:902.7px;top:204.69px;font-size:11px;line-height:11px;color:#000;font-weight:400;white-space:pre;letter-spacing:0.136px;transform:scaleY(1.13);transform-origin:0 9.31px;">Безопасность</span><span style="position:absolute;left:1021.1px;top:204.69px;font-size:11px;line-height:11px;color:#000;font-weight:400;white-space:pre;letter-spacing:-0.086px;transform:scaleY(1.13);transform-origin:0 9.31px;">Предыдущие версии</span><span style="position:absolute;left:1171.7px;top:204.69px;font-size:11px;line-height:11px;color:#000;font-weight:400;white-space:pre;letter-spacing:0.191px;transform:scaleY(1.13);transform-origin:0 9.31px;">Квота</span><span style="position:absolute;left:975.0px;top:222.69px;font-size:11px;line-height:11px;color:#000;font-weight:400;white-space:pre;letter-spacing:0.005px;transform:scaleY(1.13);transform-origin:0 9.31px;">Сервис</span><span style="position:absolute;left:1053.3px;top:222.69px;font-size:11px;line-height:11px;color:#000;font-weight:400;white-space:pre;letter-spacing:-0.102px;transform:scaleY(1.13);transform-origin:0 9.31px;">Оборудование</span><span style="position:absolute;left:1167.5px;top:222.69px;font-size:11px;line-height:11px;color:#000;font-weight:400;white-space:pre;letter-spacing:0.265px;transform:scaleY(1.13);transform-origin:0 9.31px;">Доступ</span><span style="position:absolute;left:899.3px;top:220.69px;font-size:11px;line-height:11px;color:#000;font-weight:400;white-space:pre;letter-spacing:-0.134px;transform:scaleY(1.13);transform-origin:0 9.31px;">Общие</span><span style="position:absolute;left:893.0px;top:301.69px;font-size:11px;line-height:11px;color:#000;font-weight:400;white-space:pre;letter-spacing:0.148px;transform:scaleY(1.13);transform-origin:0 9.31px;">Тип:</span><span style="position:absolute;left:1000.3px;top:301.69px;font-size:11px;line-height:11px;color:#000;font-weight:400;white-space:pre;letter-spacing:0.177px;transform:scaleY(1.13);transform-origin:0 9.31px;">Локальный диск</span><span style="position:absolute;left:893.0px;top:322.69px;font-size:11px;line-height:11px;color:#000;font-weight:400;white-space:pre;letter-spacing:0.143px;transform:scaleY(1.13);transform-origin:0 9.31px;">Файловая система:</span><span style="position:absolute;left:1000.3px;top:322.69px;font-size:11px;line-height:11px;color:#000;font-weight:400;white-space:pre;letter-spacing:-0.059px;transform:scaleY(1.13);transform-origin:0 9.31px;">NTFS</span><span style="position:absolute;left:913.7px;top:351.69px;font-size:11px;line-height:11px;color:#000;font-weight:400;white-space:pre;letter-spacing:0.087px;transform:scaleY(1.13);transform-origin:0 9.31px;">Занято:</span><span style="position:absolute;left:1013.2px;top:351.69px;font-size:11px;line-height:11px;color:#000;font-weight:400;white-space:pre;letter-spacing:-0.093px;transform:scaleY(1.13);transform-origin:0 9.31px;">11 848 474 624 байт</span><span style="position:absolute;left:1140.1px;top:351.69px;font-size:11px;line-height:11px;color:#000;font-weight:400;white-space:pre;letter-spacing:0.039px;transform:scaleY(1.13);transform-origin:0 9.31px;">11,0 ГБ</span><span style="position:absolute;left:913.7px;top:372.69px;font-size:11px;line-height:11px;color:#000;font-weight:400;white-space:pre;letter-spacing:-0.181px;transform:scaleY(1.13);transform-origin:0 9.31px;">Свободно:</span><span style="position:absolute;left:1013.2px;top:372.69px;font-size:11px;line-height:11px;color:#000;font-weight:400;white-space:pre;letter-spacing:-0.136px;transform:scaleY(1.13);transform-origin:0 9.31px;">21 984 874 496 байт</span><span style="position:absolute;left:1140.1px;top:372.69px;font-size:11px;line-height:11px;color:#000;font-weight:400;white-space:pre;letter-spacing:-0.077px;transform:scaleY(1.13);transform-origin:0 9.31px;">20,4 ГБ</span><span style="position:absolute;left:913.9px;top:407.69px;font-size:11px;line-height:11px;color:#000;font-weight:400;white-space:pre;letter-spacing:0.290px;transform:scaleY(1.13);transform-origin:0 9.31px;">Емкость:</span><span style="position:absolute;left:1012.8px;top:407.69px;font-size:11px;line-height:11px;color:#000;font-weight:400;white-space:pre;letter-spacing:-0.114px;transform:scaleY(1.13);transform-origin:0 9.31px;">33 833 349 120 байт</span><span style="position:absolute;left:1140.1px;top:407.69px;font-size:11px;line-height:11px;color:#000;font-weight:400;white-space:pre;letter-spacing:-0.077px;transform:scaleY(1.13);transform-origin:0 9.31px;">31,5 ГБ</span><span style="position:absolute;left:1031.0px;top:499.69px;font-size:11px;line-height:11px;color:#000;font-weight:400;white-space:pre;letter-spacing:0.290px;transform:scaleY(1.13);transform-origin:0 9.31px;">Диск C:</span><span style="position:absolute;left:1128.0px;top:494.69px;font-size:11px;line-height:11px;color:#000;font-weight:400;white-space:pre;letter-spacing:0.082px;transform:scaleY(1.13);transform-origin:0 9.31px;">Очистка диска</span><span style="position:absolute;left:908.5px;top:550.69px;font-size:11px;line-height:11px;color:#000;font-weight:400;white-space:pre;letter-spacing:0.089px;transform:scaleY(1.13);transform-origin:0 9.31px;">Сжать этот диск для экономии места</span><span style="position:absolute;left:908.5px;top:571.69px;font-size:11px;line-height:11px;color:#000;font-weight:400;white-space:pre;letter-spacing:0.013px;transform:scaleY(1.13);transform-origin:0 9.31px;">Разрешить индексировать содержимое файлов на этом</span><span style="position:absolute;left:908.5px;top:585.69px;font-size:11px;line-height:11px;color:#000;font-weight:400;white-space:pre;letter-spacing:0.010px;transform:scaleY(1.13);transform-origin:0 9.31px;">диске в дополнение к свойствам файла</span><span style="position:absolute;left:1018.9px;top:634.69px;font-size:11px;line-height:11px;color:#000;font-weight:400;white-space:pre;letter-spacing:0.397px;transform:scaleY(1.13);transform-origin:0 9.31px;">OK</span><span style="position:absolute;left:1088.1px;top:634.69px;font-size:11px;line-height:11px;color:#000;font-weight:400;white-space:pre;letter-spacing:0.055px;transform:scaleY(1.13);transform-origin:0 9.31px;">Отмена</span><span style="position:absolute;left:1160.8px;top:634.69px;font-size:11px;line-height:11px;color:#838383;font-weight:400;white-space:pre;letter-spacing:-0.005px;transform:scaleY(1.13);transform-origin:0 9.31px;">Применить</span><span style="position:absolute;left:1287.6px;top:747.44px;font-size:12px;line-height:12px;color:#fff;font-weight:400;white-space:pre;letter-spacing:-0.710px;">РУС</span><span style="position:absolute;left:1322.7px;top:747.44px;font-size:12px;line-height:12px;color:#fff;font-weight:400;white-space:pre;letter-spacing:-0.586px;">18:52</span>
</div></body></html>
